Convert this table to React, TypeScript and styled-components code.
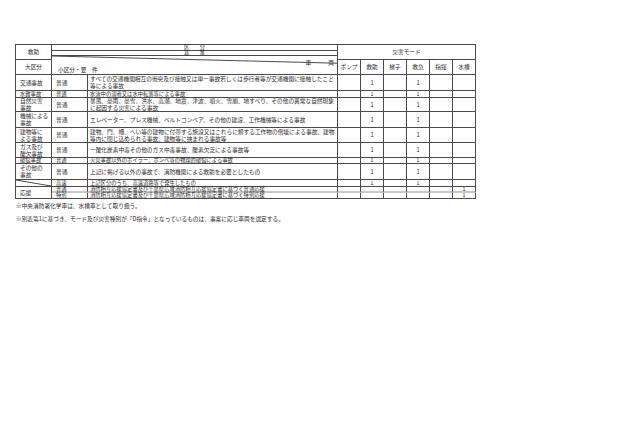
import styled, { createGlobalStyle } from "styled-components";

const GlobalStyle = createGlobalStyle`
  html, body {
    margin: 0;
    padding: 0;
    background: #ffffff;
  }
  body {
    font-family: "Noto Sans CJK JP", "Noto Sans", sans-serif;
    color: #2b2b2b;
  }
`;

// one row of the table body
type Row = {
  major?: string[];
  minor: string;
  text: string[];
  rescue?: boolean;
  ambulance?: boolean;
  tank?: boolean;
};

const rows: Row[] = [
  {
    major: ["交通事故"],
    minor: "普通",
    text: [
      "すべての交通機関相互の衝突及び接触又は単一事故若しくは歩行者等が交通機関に接触したこと",
      "等による事故",
    ],
    rescue: true,
    ambulance: true,
  },
  {
    major: ["水難事故"],
    minor: "普通",
    text: ["水泳中の溺者又は水中転落等による事故"],
    rescue: true,
    ambulance: true,
  },
  {
    major: ["自然災害", "事故"],
    minor: "普通",
    text: [
      "暴風、豪雨、豪雪、洪水、高潮、地震、津波、噴火、雪崩、地すべり、その他の異常な自然現象",
      "に起因する災害による事故",
    ],
    rescue: true,
    ambulance: true,
  },
  {
    major: ["機械による", "事故"],
    minor: "普通",
    text: ["エレベーター、プレス機械、ベルトコンベア、その他の建設、工作機械等による事故"],
    rescue: true,
    ambulance: true,
  },
  {
    major: ["建物等に", "よる事故"],
    minor: "普通",
    text: [
      "建物、門、柵、へい等の建物に付帯する施設又はこれらに類する工作物の倒壊による事故、建物",
      "等内に閉じ込められる事故、建物等に挟まれる事故等",
    ],
    rescue: true,
    ambulance: true,
  },
  {
    major: ["ガス及び", "酸欠事故"],
    minor: "普通",
    text: ["一酸化炭素中毒その他のガス中毒事故、酸素欠乏による事故等"],
    rescue: true,
    ambulance: true,
  },
  {
    major: ["破裂事故"],
    minor: "普通",
    text: ["火災事故以外のボイラー、ボンベ等の物理的破裂による事故"],
    rescue: true,
    ambulance: true,
  },
  {
    major: ["その他の", "事故"],
    minor: "普通",
    text: ["上記に掲げる以外の事故で、消防機関による救助を必要としたもの"],
    rescue: true,
    ambulance: true,
  },
  {
    minor: "高速",
    text: ["上記区分のうち、高速道路等で発生したもの"],
    rescue: true,
    ambulance: true,
  },
  {
    minor: "普通",
    text: ["消防相互応援協定書及び千葉県広域消防相互応援協定書に基づく普通応援"],
    tank: true,
  },
  {
    minor: "特別",
    text: ["消防相互応援協定書及び千葉県広域消防相互応援協定書に基づく特別応援"],
    tank: true,
  },
];

const units = ["ポンプ", "救助", "梯子", "救急", "指揮", "水槽"];

// heights of the grid rows: 4 header rows, then one per body row
const headHeights = [6, 5, 4, 15];
const bodyHeights = [16, 7, 14, 16, 15, 15, 6, 16, 7, 6, 6];
const rowHeights = [...headHeights, ...bodyHeights];

export default function App() {
  return (
    <>
      <GlobalStyle />
      <Page>
        <Sheet>
          {/* header */}
          <Cell $col={1} $row={1} $rowSpan={3} $align="center">
            救助
          </Cell>
          <Cell $col={2} $colSpan={2} $row={1} $align="center" $tight>
            区　　分
          </Cell>
          <Cell $col={2} $colSpan={2} $row={2} $align="center" $tight>
            基　　準
          </Cell>
          <Cell $col={4} $colSpan={6} $row={1} $rowSpan={3} $align="center">
            災害モード
          </Cell>
          <SplitCell $col={2} $colSpan={2} $row={3} $rowSpan={2}>
            <Slash viewBox="0 0 100 100" preserveAspectRatio="none">
              <line x1="0" y1="0" x2="100" y2="40" />
            </Slash>
            <VehicleLabel>車　　　両</VehicleLabel>
            <SubLabel>小区分・要　件</SubLabel>
          </SplitCell>
          <Cell $col={1} $row={4} $align="center">
            大区分
          </Cell>
          {units.map((u, i) => (
            <Cell key={u} $col={4 + i} $row={4} $align="center">
              {u}
            </Cell>
          ))}

          {/* body */}
          {rows.map((r, i) => {
            const row = 5 + i;
            const soft = i === 9;
            const tight = bodyHeights[i] <= 7;
            return [
              r.major ? (
                <Cell key={`m${i}`} $col={1} $row={row} $pad="0 0 0 4px" $tight={tight}>
                  <Lines>
                    {r.major.map((l) => (
                      <span key={l}>{l}</span>
                    ))}
                  </Lines>
                </Cell>
              ) : null,
              <Cell key={`n${i}`} $col={2} $row={row} $pad="0 0 0 4px" $soft={soft} $tight={tight}>
                {r.minor}
              </Cell>,
              <Cell key={`t${i}`} $col={3} $row={row} $pad="0 0 0 2px" $soft={soft} $tight={tight}>
                <Lines>
                  {r.text.map((l) => (
                    <span key={l}>{l}</span>
                  ))}
                </Lines>
              </Cell>,
              ...units.map((u, j) => {
                const on =
                  (u === "救助" && r.rescue) ||
                  (u === "救急" && r.ambulance) ||
                  (u === "水槽" && r.tank);
                return (
                  <Cell
                    key={`v${i}-${j}`}
                    $col={4 + j}
                    $row={row}
                    $align="center"
                    $soft={soft}
                    $tight={tight}
                  >
                    {on ? "1" : ""}
                  </Cell>
                );
              }),
            ];
          })}

          {/* empty slashed cell beside 高速 */}
          <SplitCell $col={1} $row={13}>
            <Slash viewBox="0 0 100 100" preserveAspectRatio="none">
              <line x1="0" y1="0" x2="100" y2="100" />
            </Slash>
          </SplitCell>
          <Cell $col={1} $row={14} $rowSpan={2} $pad="0 0 0 4px">
            応援
          </Cell>
        </Sheet>

        <Notes>
          <Note>※中央消防署化学車は、水槽車として取り扱う。</Note>
          <Note>※別表第1に基づき、モード及び災害種別が「D指令」となっているものは、事案に応じ車両を選定する。</Note>
        </Notes>
      </Page>
    </>
  );
}

const Page = styled.div`
  width: 630px;
  height: 439px;
  padding: 44px 0 0 15px;
  box-sizing: border-box;
  font-size: 5.7px;
  line-height: 7px;
`;

const Sheet = styled.div`
  display: grid;
  grid-template-columns: 36px 36px 250px repeat(6, 23px);
  grid-template-rows: ${rowHeights.map((h) => `${h}px`).join(" ")};
  width: max-content;
  border-top: 1px solid #4a4a4a;
  border-left: 1px solid #4a4a4a;
`;

type CellProps = {
  $col: number;
  $row: number;
  $colSpan?: number;
  $rowSpan?: number;
  $align?: "left" | "center" | "right";
  $pad?: string;
  $soft?: boolean;
  $tight?: boolean;
};

const Cell = styled.div<CellProps>`
  grid-column: ${(p) => p.$col} / span ${(p) => p.$colSpan ?? 1};
  grid-row: ${(p) => p.$row} / span ${(p) => p.$rowSpan ?? 1};
  display: flex;
  align-items: center;
  justify-content: ${(p) =>
    p.$align === "center" ? "center" : p.$align === "right" ? "flex-end" : "flex-start"};
  padding: ${(p) => p.$pad ?? "0"};
  border-right: 1px solid #4a4a4a;
  border-bottom: ${(p) => (p.$soft ? "2px solid #c8c8c8" : "1px solid #4a4a4a")};
  box-sizing: border-box;
  overflow: visible;
  white-space: nowrap;
  font-size: ${(p) => (p.$tight ? "5.3px" : "5.7px")};
  line-height: ${(p) => (p.$tight ? "5px" : "6px")};
  min-height: 0;
  min-width: 0;
`;

const Lines = styled.div`
  display: flex;
  flex-direction: column;
  gap: 1px;
`;

const SplitCell = styled(Cell)`
  position: relative;
  flex-direction: column;
  align-items: stretch;
  justify-content: space-between;
  padding: 4px 3px 1px 6px;
`;

const Slash = styled.svg`
  position: absolute;
  inset: 0;
  width: 100%;
  height: 100%;

  line {
    stroke: #4a4a4a;
    stroke-width: 1;
    vector-effect: non-scaling-stroke;
  }
`;

const VehicleLabel = styled.span`
  align-self: flex-end;
`;

const SubLabel = styled.span`
  align-self: flex-start;
`;

const Notes = styled.div`
  display: flex;
  flex-direction: column;
  gap: 6px;
  padding: 3px 0 0 1px;
`;

const Note = styled.div`
  white-space: nowrap;
`;
